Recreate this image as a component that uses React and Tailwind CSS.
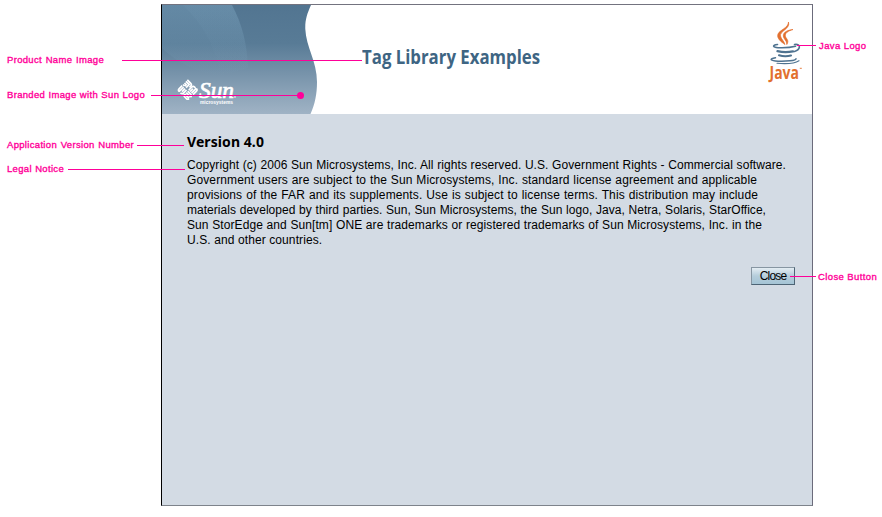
import React from 'react';

const legal = [
  ['Copyright (c) 2006 Sun Microsystems, Inc. All rights reserved. U.S. Government Rights - Commercial software.', 'w-[599px] tracking-[0.08px]'],
  ['Government users are subject to the Sun Microsystems, Inc. standard license agreement and applicable', 'w-[570px] tracking-[0.12px]'],
  ['provisions of the FAR and its supplements. Use is subject to license terms. This distribution may include', 'w-[571px] tracking-[0.12px]'],
  ['materials developed by third parties. Sun, Sun Microsystems, the Sun logo, Java, Netra, Solaris, StarOffice,', 'w-[579px] tracking-[0.04px]'],
  ['Sun StorEdge and Sun[tm] ONE are trademarks or registered trademarks of Sun Microsystems, Inc. in the', 'w-[575px] tracking-[0.08px]'],
  ['U.S. and other countries.', 'w-[135px] tracking-[0.1px]'],
];

const callouts = [
  'left-[122px] top-[60px] w-[240px]',
  'left-[151px] top-[95px] w-[149px]',
  'left-[137px] top-[145px] w-[47px]',
  'left-[68px] top-[169px] w-[117px]',
  'left-[797px] top-[45px] w-[19px]',
  'left-[790px] top-[276px] w-[26px]',
];

function SunBanner() {
  return (
    <svg className="block h-[109px] w-[160px]" viewBox="162 5 160 109">
      <defs>
        <linearGradient id="sky" x1="0" y1="0" x2="0" y2="1">
          <stop offset="0" stopColor="#527591" />
          <stop offset="0.35" stopColor="#587b96" />
          <stop offset="1" stopColor="#a0b3c5" />
        </linearGradient>
        <linearGradient id="glow" x1="0" y1="0" x2="0" y2="1">
          <stop offset="0" stopColor="#7fa7c2" stopOpacity="0.4" />
          <stop offset="1" stopColor="#7fa7c2" stopOpacity="0" />
        </linearGradient>
      </defs>
      <path fill="url(#sky)" d="M162 5H311C307 14 305 20 305.300 29C306 47 317 61 317 82C317 94 315 104 310.500 114H162Z" />
      <path fill="url(#glow)" d="M162 5H232C242 24 247 43 248 68L220 76C205 74 180 66 162 48Z" />
      <path fill="url(#glow)" opacity="0.25" d="M183 5H232C242 24 247 43 248 68L220 76C216 46 203 25 183 5Z" />
      <g transform="translate(187.700 90) rotate(45) scale(1.03)" fill="none" stroke="#fff" strokeWidth="1.600">
        <path d="M-7.200-6.700H-2.500Q-.6-6.700-.6-4.800V-3M-7.200-4.700H-2.700V-.5M-7-2.600H-4.700V-.6M-7-.6H-5" />
        <path d="M.8-.6V-4.700Q.8-6.700 2.800-6.700H4M2.800-.5V-4.500M4.800-.5V-7M6.800-.5V-5Q6.800-7 5-7" />
        <path d="M-6.800.8V4.800Q-6.800 6.900-4.800 6.900M-4.800.8V6.900M-2.800.8V5M-.8.8V5Q-.8 6.900-3 6.900" />
        <path d="M.8.8H5Q6.800.8 6.800 3M.8 2.800H6.800M.8 4.800H6.800M2.500 6.800H5Q6.800 6.800 6.800 5M.8 4.800Q.8 6.800 3 6.800" />
      </g>
      <text x="199" y="98" textLength="35" lengthAdjust="spacingAndGlyphs" className="fill-white font-['Liberation_Serif',serif] text-[24px] italic" stroke="#fff" strokeWidth="0.700">Sun</text>
      <circle cx="235" cy="97" r="0.800" fill="#fff" />
      <text x="200" y="104" textLength="33" lengthAdjust="spacingAndGlyphs" className="fill-white font-['Liberation_Sans',sans-serif] text-[6px] font-bold">microsystems</text>
    </svg>
  );
}

function JavaLogo() {
  return (
    <svg className="block h-[66px] w-[38px]" viewBox="767 19 38 66">
      <g fill="#e2702f" stroke="#e2702f" strokeWidth="0.700">
        <path d="M788.500 22C790.500 29 779.500 31 780.500 36C781 39 784 41 785 44.500C780.500 41.500 776.500 38 778 34C779.500 30 788.500 28 788.500 22Z" />
        <path d="M793 29.500C788 31 784.500 33 785.500 36.500C786 38.500 789.500 40.500 786.800 44.500C787 40.500 783.500 39 783.300 36C783 31.500 789 30 793 29.500Z" />
      </g>
      <g fill="none" stroke="#4f7390" strokeLinecap="round">
        <path strokeWidth="1.600" d="M777.500 44.500C771.500 45.200 773 47.400 778 47.700C785 48 791 47.500 795.500 46.300" />
        <path strokeWidth="1.600" d="M794.500 44.500C801.500 43.500 800.500 49.500 794.500 51.500" />
        <path strokeWidth="2.300" d="M777.500 51.200Q785 53 793 51.400" />
        <path strokeWidth="2.100" d="M779 55.300Q785 57 791 55.500" />
        <path strokeWidth="1.500" d="M775.500 57.800C768.500 59 770.500 60.700 778 61.200C786 61.500 796 60.700 796 58.700" />
        <path strokeWidth="1.100" d="M777 63.300Q793 64.700 799 60.700" />
      </g>
      <text x="769.500" y="78.500" textLength="29.500" lengthAdjust="spacingAndGlyphs" className="fill-[#e2702f] font-['Open_Sans',sans-serif] text-[17px] font-bold">Java</text>
      <path d="M799.800 68.300H801.800" stroke="#e2702f" strokeWidth="0.900" />
    </svg>
  );
}

const label = "[text-align-last:justify] [-webkit-text-stroke:0.35px_#ff0099]";

export default function App() {
  return (
    <div className="relative flex h-[517px] w-[882px] overflow-hidden bg-white font-['Liberation_Sans',Arial,sans-serif]">
      <aside className="w-[161px] shrink-0 pl-[7px] pt-[54px] text-[9.5px] leading-[12px] tracking-[0.32px] whitespace-nowrap text-[#ff0099]">
        <p className={`w-[97px] ${label}`}>Product Name Image</p>
        <p className={`mt-[23px] w-[138px] ${label}`}>Branded Image with Sun Logo</p>
        <p className={`mt-[38px] w-[127px] ${label}`}>Application Version Number</p>
        <p className={`mt-3 w-[57px] ${label}`}>Legal Notice</p>
      </aside>

      <main className="mt-1 h-[502px] w-[652px] shrink-0 border border-t-[#73737f] border-r-[#6b6b7b] border-b-[#7d838b] border-l-black bg-[#d3dbe4]">
        <header className="flex h-[109px] bg-white">
          <SunBanner />
          <h1 className="ml-10 mt-[37px] w-[178px] font-['Open_Sans',sans-serif] text-[20px] leading-[30px] font-bold whitespace-nowrap text-[#3e6583]">
            <span className="inline-block origin-left scale-x-[0.84]">Tag Library Examples</span>
          </h1>
          <div className="ml-auto mr-[7px] mt-[14px]">
            <JavaLogo />
          </div>
        </header>
        <section className="px-[25px] pt-[18px] text-black">
          <h2 className="font-['Noto_Sans',sans-serif] text-[14px] leading-5 font-bold tracking-[0.08px]">Version 4.0</h2>
          <div className="mt-1.5 text-[12px] leading-[15px] whitespace-nowrap">
            {legal.map(([line, fit]) => (
              <p key={line} className={`${fit} [text-align-last:justify]`}>{line}</p>
            ))}
          </div>
        </section>
        <div className="flex justify-end pr-[17px] pt-[19px]">
          <button className="h-[18px] w-[44px] border border-t-[#8796a2] border-r-[#4d6475] border-b-[#4d6475] border-l-[#8796a2] bg-linear-to-b from-[#e4edf3] via-[#b5cddb] to-[#a4c4d5] pt-px text-[12px] leading-[15px] tracking-[-0.8px]">Close</button>
        </div>
      </main>

      <aside className="pl-[6px] pt-[40px] text-[9.5px] leading-[12px] tracking-[0.4px] whitespace-nowrap text-[#ff0099]">
        <p className={`w-[47px] ${label}`}>Java Logo</p>
        <p className={`-ml-px mt-[219px] w-[58px] ${label}`}>Close Button</p>
      </aside>

      {callouts.map((place) => (
        <i key={place} className={`absolute h-px bg-[#ff0099] ${place}`} />
      ))}
      <i className="absolute left-[297px] top-[92px] size-[7px] rounded-full bg-[#ff0099]" />
    </div>
  );
}
